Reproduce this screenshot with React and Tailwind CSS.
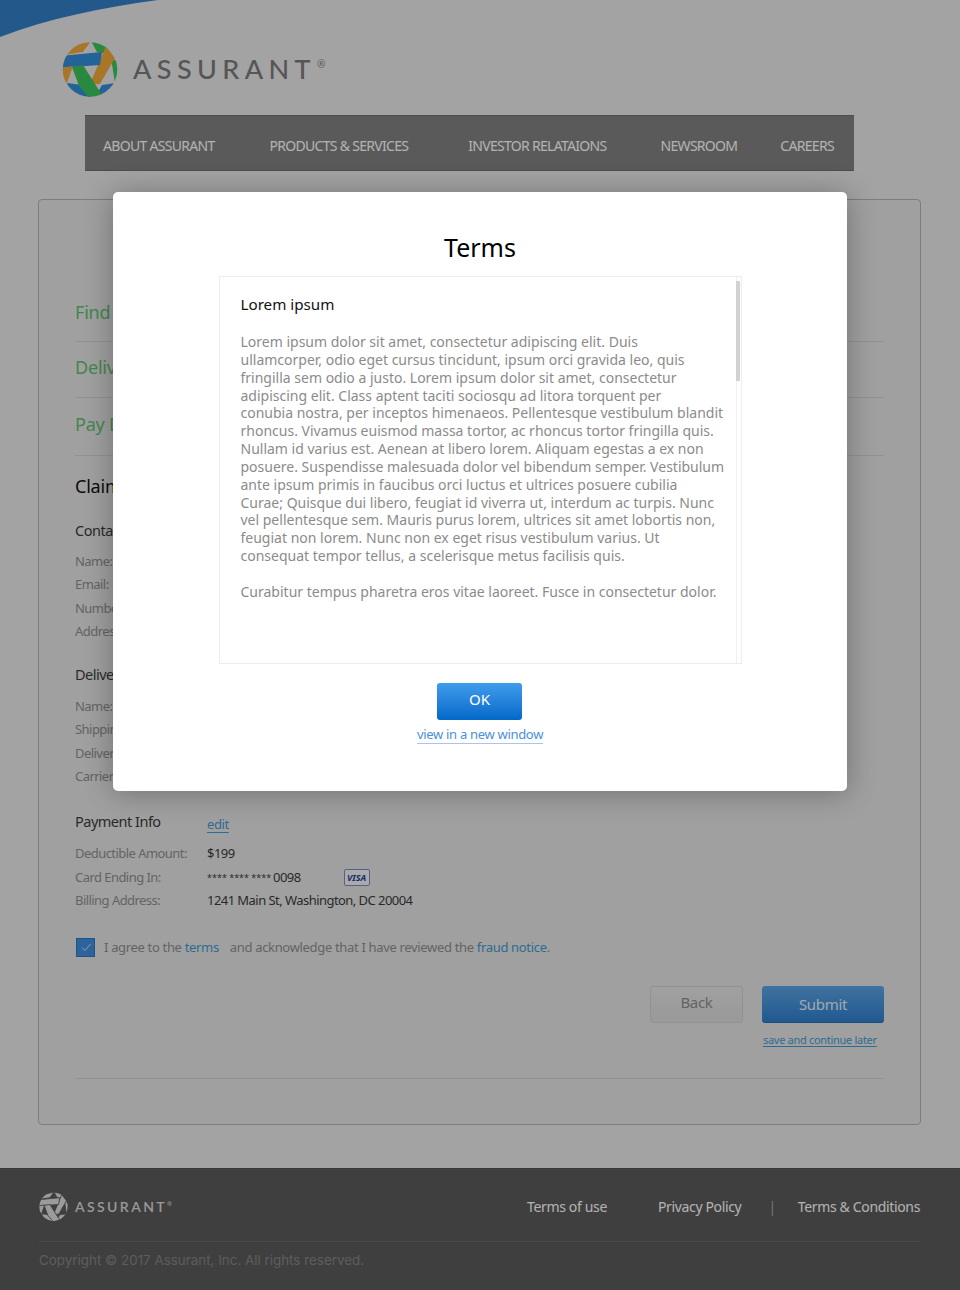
const sans = 'font-["Noto_Sans",sans-serif]';

function Logo() {
  return (
    <svg viewBox="62 41 56 56" className="w-[56px] h-[56px] block">
      <defs>
        <clipPath id="logoClip">
          <circle cx="90" cy="69.5" r="27.3" />
        </clipPath>
      </defs>
      <g clipPath="url(#logoClip)">
        {/* ribbons, woven */}
        <polygon points="60,57 66,47 91,41 83,52 70,54" fill="#f1a93a" />
        <polygon points="91,41 106,44 110,53 102,53 97,52" fill="#3cc45c" />
        <polygon points="111,58 119,62 119,75 115,83" fill="#3cc45c" />
        <polygon points="106,46 115,58 100,84 90,84" fill="#f1a93a" />
        <polygon points="60,56 102,52 100,65 60,68" fill="#348fd8" />
        <polygon points="60,68 73,66 67,83 60,80" fill="#f1a93a" />
        <polygon points="67,83 82,85 92,98 72,98" fill="#348fd8" />
        <polygon points="102,85 115,83 103,97 98,92" fill="#348fd8" />
        <polygon points="72,67 83,65 102,95 90,99 79,86" fill="#3cc45c" />
      </g>
    </svg>
  );
}

function FooterLogo() {
  return (
    <svg viewBox="62 41 56 56" className="w-[29px] h-[29px] block">
      <defs>
        <clipPath id="footClip">
          <circle cx="90" cy="69.5" r="27.3" />
        </clipPath>
      </defs>
      <g clipPath="url(#footClip)" fill="#dedede" stroke="#5b5b5b" strokeWidth="1.6">
        <polygon points="60,57 66,47 91,41 83,52 70,54" />
        <polygon points="91,41 106,44 110,53 102,53 97,52" />
        <polygon points="111,58 119,62 119,75 115,83" />
        <polygon points="106,46 115,58 100,84 90,84" />
        <polygon points="60,56 102,52 100,65 60,68" />
        <polygon points="60,68 73,66 67,83 60,80" />
        <polygon points="67,83 82,85 92,98 72,98" />
        <polygon points="102,85 115,83 103,97 98,92" />
        <polygon points="72,67 83,65 102,95 90,99 79,86" />
      </g>
    </svg>
  );
}

const navItems = [
  ['ABOUT ASSURANT', 'ml-[18px]'],
  ['PRODUCTS & SERVICES', 'ml-[55px]'],
  ['INVESTOR RELATAIONS', 'ml-[60px]'],
  ['NEWSROOM', 'ml-[54px]'],
  ['CAREERS', 'ml-[43px]'],
];

function InfoRow({ label, children }) {
  return (
    <div className="flex h-[23.5px] items-center text-[13px] tracking-[-0.55px] whitespace-nowrap">
      <span className="w-[132px] text-[#8f8f8f]">{label}</span>
      <span className="text-[#3c3c3c] flex items-center">{children}</span>
    </div>
  );
}

function Step({ text, height }) {
  return (
    <div className={`${height} border-b border-[#d2d2d2] flex items-center text-[18px] tracking-[-0.2px] text-[#5fc070]`}>{text}</div>
  );
}

export default function App() {
  return (
    <div className={`relative h-[1290px] w-[960px] overflow-hidden bg-[#eaeaea] ${sans}`}>
      {/* top arc */}
      <svg viewBox="0 0 160 38" className="absolute left-0 top-0 w-[160px] h-[38px]">
        <path d="M0 0 H158 C100 8 50 18 0 37 Z" fill="#327fc6" />
      </svg>

      <header className="h-[115px] pl-[62px] pt-[41px] flex items-start">
        <Logo />
        <span className="ml-[15px] mt-[8px] text-[27px] leading-[40px] tracking-[5.4px] font-medium text-[#7c7c7c] font-['Lato',sans-serif]">ASSURANT</span>
        <span className="ml-[1px] mt-[16px] text-[10px] leading-[14px] text-[#828282]">®</span>
      </header>

      <nav className="ml-[85px] w-[769px] h-[56px] bg-[#828282] border-y border-[#6f6f6f] flex items-center pt-[4px] text-[14px] tracking-[-0.7px] whitespace-nowrap text-white">
        {navItems.map(([label, margin]) => (
          <a key={label} className={margin}>{label}</a>
        ))}
      </nav>

      <main className="ml-[38px] mt-[28px] w-[883px] h-[926px] rounded-[4px] border border-[#b4b4b4] pl-[36px] pr-[36px] pt-[85px] bg-[#e6e6e6]">
        <Step text="Find" height="h-[57px] pb-[1px]" />
        <Step text="Delivery" height="h-[56px] pb-[4px]" />
        <Step text="Pay D" height="h-[58px] pb-[4px]" />
        <h2 className="mt-[17px] text-[18px] tracking-[-0.2px] text-[#111]">Claim</h2>

        <h3 className="mt-[20px] text-[14.5px] tracking-[-0.5px] text-[#3c3c3c]">Contact</h3>
        <div className="mt-[8px]">
          <InfoRow label="Name:" />
          <InfoRow label="Email:" />
          <InfoRow label="Number:" />
          <InfoRow label="Address:" />
        </div>

        <h3 className="mt-[20px] text-[14.5px] tracking-[-0.5px] text-[#3c3c3c]">Delivery</h3>
        <div className="mt-[9px]">
          <InfoRow label="Name:" />
          <InfoRow label="Shipping:" />
          <InfoRow label="Delivery:" />
          <InfoRow label="Carrier:" />
        </div>

        <div className="mt-[22px] flex items-start">
          <h3 className="w-[132px] text-[14.5px] tracking-[-0.5px] text-[#3c3c3c]">Payment Info</h3>
          <a className="mt-[4px] text-[13px] tracking-[-0.4px] text-[#3f9bd0] underline underline-offset-3">edit</a>
        </div>
        <div className="mt-[8px]">
          <InfoRow label="Deductible Amount:">$199</InfoRow>
          <InfoRow label="Card Ending In:">
            <span className="text-[9px] tracking-[0px] mr-[4px] w-[62px]">**** **** ****</span>
            0098
            <span className="ml-[43px] w-[26px] h-[17px] rounded-[2px] border border-[#7b8cc0] bg-[#f4f4f4] text-[9px] tracking-normal leading-[15px] text-center font-bold italic text-[#1e3d99]">VISA</span>
          </InfoRow>
          <InfoRow label="Billing Address:">1241 Main St, Washington, DC 20004</InfoRow>
        </div>

        <div className="mt-[25px] flex items-center text-[13px] tracking-[-0.33px] whitespace-nowrap text-[#8f8f8f]">
          <span className="w-[19px] h-[19px] ml-[1px] bg-[#3f8fe0] border border-[#3078c0] flex items-center justify-center">
            <svg viewBox="0 0 12 12" className="w-[12px] h-[12px]">
              <path d="M2 6.5 L5 9.5 L10.5 3" stroke="#cfe4fa" strokeWidth="1" fill="none" />
            </svg>
          </span>
          <span className="ml-[9px]">I agree to the <a className="text-[#3f9bd0]">terms</a></span>
          <span className="ml-[11px]">and acknowledge that I have reviewed the <a className="text-[#3f9bd0]">fraud notice</a>.</span>
        </div>

        <div className="mt-[29px] flex justify-end gap-[19px]">
          <button className="w-[93px] h-[37px] rounded-[3px] border border-[#d0d0d0] bg-linear-to-b from-[#e6e6e6] to-[#dcdcdc] text-[15px] tracking-[-0.3px] text-[#8f8f8f] pb-[5px]">Back</button>
          <button className="w-[122px] h-[37px] rounded-[3px] bg-linear-to-b from-[#5da4e4] to-[#2e80cf] border-b border-[#2a70b0] text-[15px] tracking-[-0.3px] text-[#e6f2ff]">Submit</button>
        </div>
        <div className="mt-[9px] flex justify-end">
          <a className="w-[121px] text-[11px] tracking-[-0.3px] whitespace-nowrap text-[#3f9bd0] underline underline-offset-2">save and continue later</a>
        </div>
        <div className="mt-[29px] border-t border-[#d2d2d2]" />
      </main>

      <footer className="absolute left-0 bottom-0 w-full h-[122px] bg-[#5b5b5b] border-t border-[#525252] pl-[39px] pr-[40px]">
        <div className="h-[73px] border-b border-[#696969] flex items-center text-[14px] tracking-[-0.35px] whitespace-nowrap text-white pt-[2px]">
          <FooterLogo />
          <span className="ml-[7px] text-[14px] tracking-[2.4px] font-semibold text-[#dcdcdc] font-['Lato',sans-serif]">ASSURANT</span>
          <span className="text-[6px] mb-[4px] text-[#dcdcdc]">®</span>
          <a className="ml-auto">Terms of use</a>
          <a className="ml-[51px]">Privacy Policy</a>
          <span className="ml-[27px] text-[#a8a8a8]">|</span>
          <a className="ml-[22px]">Terms &amp; Conditions</a>
        </div>
        <p className="mt-[8px] text-[13.4px] text-[#858585] font-['Inter',sans-serif]">Copyright © 2017 Assurant, Inc. All rights reserved.</p>
      </footer>

      {/* overlay */}
      <div className="absolute inset-0 bg-black/30" />

      {/* modal */}
      <div className="absolute left-[113px] top-[192px] w-[734px] h-[599px] bg-white rounded-[5px] shadow-[0_2px_30px_rgba(0,0,0,0.3)] flex flex-col items-center">
        <h1 className="mt-[35px] text-[25px] leading-[40px] text-black">Terms</h1>
        <div className="mt-[9px] w-[523px] h-[388px] border border-[#ededed] relative pl-[21px] pt-[16px] overflow-hidden">
          <span className="absolute right-0 top-0 bottom-0 w-[5px] border-l border-[#f0f0f0]" />
          <span className="absolute right-[1px] top-[4px] w-[3.5px] h-[100px] bg-[#d2d2d2]" />
          <h2 className="text-[15.2px] leading-[22px] text-[#111]">Lorem ipsum</h2>
          <p className="mt-[18px] text-[14px] leading-[17.85px] text-[#8b8b8b] whitespace-nowrap">
            Lorem ipsum dolor sit amet, consectetur adipiscing elit. Duis<br />
            ullamcorper, odio eget cursus tincidunt, ipsum orci gravida leo, quis<br />
            fringilla sem odio a justo. Lorem ipsum dolor sit amet, consectetur<br />
            adipiscing elit. Class aptent taciti sociosqu ad litora torquent per<br />
            conubia nostra, per inceptos himenaeos. Pellentesque vestibulum blandit<br />
            rhoncus. Vivamus euismod massa tortor, ac rhoncus tortor fringilla quis.<br />
            Nullam id varius est. Aenean at libero lorem. Aliquam egestas a ex non<br />
            posuere. Suspendisse malesuada dolor vel bibendum semper. Vestibulum<br />
            ante ipsum primis in faucibus orci luctus et ultrices posuere cubilia<br />
            Curae; Quisque dui libero, feugiat id viverra ut, interdum ac turpis. Nunc<br />
            vel pellentesque sem. Mauris purus lorem, ultrices sit amet lobortis non,<br />
            feugiat non lorem. Nunc non ex eget risus vestibulum varius. Ut<br />
            consequat tempor tellus, a scelerisque metus facilisis quis.
          </p>
          <p className="mt-[18px] text-[14px] leading-[18px] text-[#8b8b8b] whitespace-nowrap">
            Curabitur tempus pharetra eros vitae laoreet. Fusce in consectetur dolor.
          </p>
        </div>
        <button className="mt-[19px] -ml-px w-[85px] h-[37px] rounded-[3px] bg-linear-to-b from-[#3f9dec] to-[#0068c9] text-[15px] text-white pb-[4px]">OK</button>
        <a className="mt-[6px] text-[13px] tracking-[-0.3px] leading-[17px] text-[#4a8fe0] border-b border-[#a8c4ef]">view in a new window</a>
      </div>
    </div>
  );
}
